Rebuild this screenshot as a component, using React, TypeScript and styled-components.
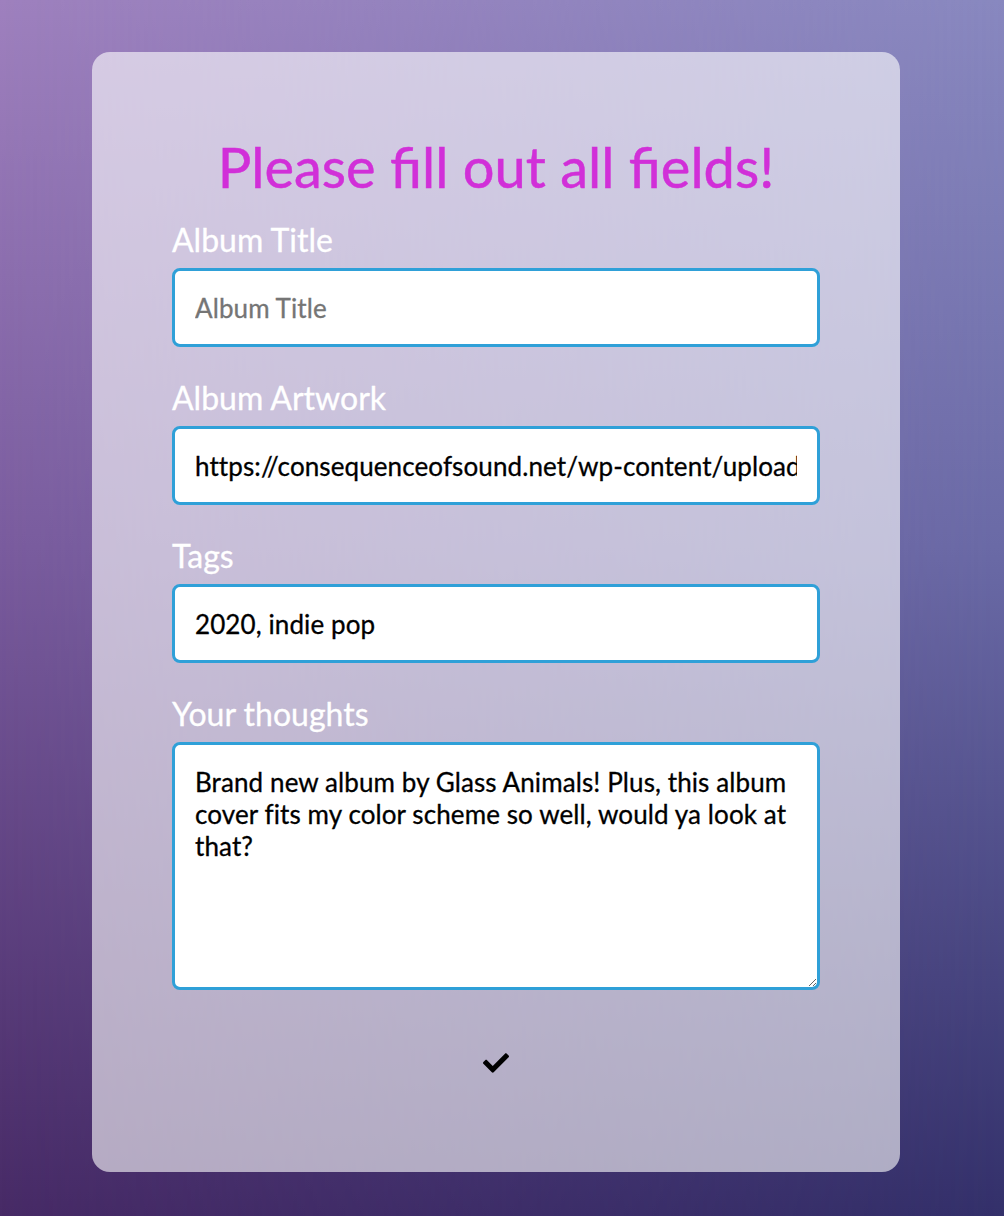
import React from "react";
import styled, { createGlobalStyle } from "styled-components";
import { FaCheck } from "react-icons/fa";

const Global = createGlobalStyle`
  html, body { margin: 0; padding: 0; }
  body { font-family: Lato, "Noto Sans", sans-serif; }
  * { box-sizing: border-box; }
`;

const Page = styled.div`
  position: relative;
  min-height: 1216px;
  padding-top: 52px;
  background: linear-gradient(180deg, #9e80be 0%, #7a5c9e 45%, #472a66 100%);
  overflow: hidden;
  &::before {
    content: "";
    position: absolute;
    inset: 0;
    background: linear-gradient(180deg, #8888bf 0%, #6a6aa6 45%, #33306a 100%);
    -webkit-mask-image: linear-gradient(90deg, transparent 0%, black 100%);
    mask-image: linear-gradient(90deg, transparent 0%, black 100%);
  }
`;

const Card = styled.form`
  position: relative;
  z-index: 1;
  width: 808px;
  height: 1120px;
  margin: 0 0 0 92px;
  padding: 81px 80px 0;
  border-radius: 18px;
  background: rgba(255, 255, 255, 0.6);
  display: flex;
  flex-direction: column;
`;

const Title = styled.h1`
  margin: 0 0 18px;
  text-align: center;
  font-family: Lato, sans-serif;
  font-weight: 400;
  font-size: 56px;
  line-height: 67px;
  color: #d12fd8;
  -webkit-text-stroke: 0.5px #d12fd8;
`;

const Field = styled.div`
  display: flex;
  flex-direction: column;
  margin-bottom: 29px;
`;

const Label = styled.label`
  font-family: Lato, sans-serif;
  font-size: 32px;
  line-height: 38px;
  color: #ffffff;
  padding-top: 3px;
  margin-bottom: 9px;
  -webkit-text-stroke: 0.3px #ffffff;
`;

const Input = styled.input`
  width: 100%;
  height: 79px;
  padding: 0 20px;
  border: 3px solid #2fa0d8;
  border-radius: 8px;
  background: #fff;
  font-family: Lato, sans-serif;
  font-size: 26px;
  letter-spacing: 0.1px;
  color: #000;
  outline: none;
  -webkit-text-stroke: 0.3px currentColor;
  &::placeholder { color: #757575; }
`;

const TextArea = styled.textarea`
  width: 100%;
  height: 248px;
  padding: 21px 20px;
  border: 3px solid #2fa0d8;
  border-radius: 8px;
  background: #fff;
  font-family: Lato, sans-serif;
  font-size: 26px;
  letter-spacing: 0.1px;
  line-height: 32px;
  color: #000;
  outline: none;
  resize: vertical;
  -webkit-text-stroke: 0.3px #000;
`;

const Submit = styled.button`
  align-self: center;
  margin-top: 31px;
  background: none;
  border: none;
  padding: 0;
  color: #000;
  cursor: pointer;
  display: flex;
`;

export default function App() {
  return (
    <>
      <Global />
      <Page>
        <Card onSubmit={(e) => e.preventDefault()}>
          <Title>Please fill out all fields!</Title>
          <Field>
            <Label>Album Title</Label>
            <Input placeholder="Album Title" />
          </Field>
          <Field>
            <Label>Album Artwork</Label>
            <Input defaultValue="https://consequenceofsound.net/wp-content/uploads/2020/06/glass-animals-dreamland-album-artwork.jpg" />
          </Field>
          <Field>
            <Label>Tags</Label>
            <Input defaultValue="2020, indie pop" />
          </Field>
          <Field>
            <Label>Your thoughts</Label>
            <TextArea defaultValue="Brand new album by Glass Animals! Plus, this album cover fits my color scheme so well, would ya look at that?" />
          </Field>
          <Submit type="submit" aria-label="Submit">
            <FaCheck size={26} />
          </Submit>
        </Card>
      </Page>
    </>
  );
}
